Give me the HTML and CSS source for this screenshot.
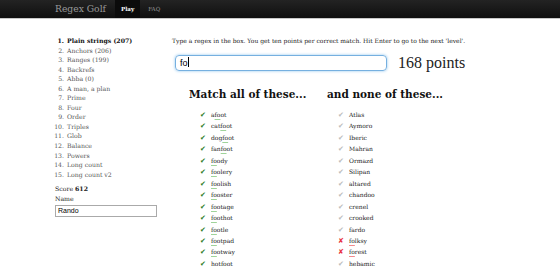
FILE: index.html
```html
<!DOCTYPE html>
<html>
<head>
<meta charset="utf-8">
<link rel="stylesheet" href="styles.css">
</head>
<body>
<nav class="nav">
  <span class="brand">Regex Golf</span>
  <span class="tab active">Play</span>
  <span class="tab">FAQ</span>
</nav>
<div class="page">
  <aside class="side">
    <ol class="levels">
      <li class="cur">Plain strings (207)</li>
      <li>Anchors (206)</li>
      <li>Ranges (199)</li>
      <li>Backrefs</li>
      <li>Abba (0)</li>
      <li>A man, a plan</li>
      <li>Prime</li>
      <li>Four</li>
      <li>Order</li>
      <li>Triples</li>
      <li>Glob</li>
      <li>Balance</li>
      <li>Powers</li>
      <li>Long count</li>
      <li>Long count v2</li>
    </ol>
    <div class="score">Score <b>612</b></div>
    <div class="label">Name</div>
    <div class="name">Rando</div>
  </aside>
  <main class="main">
    <p class="intro">Type a regex in the box. You get ten points per correct match. Hit Enter to go to the next 'level'.</p>
    <div class="inputrow">
      <div class="regex">fo<span class="caret"></span></div>
      <div class="points">168 points</div>
    </div>
    <div class="cols">
      <div class="col">
        <h2>Match all of these...</h2>
        <ul class="words">
          <li><span class="mk ok">✔</span>a<u class="g">fo</u>ot</li>
          <li><span class="mk ok">✔</span>cat<u class="g">fo</u>ot</li>
          <li><span class="mk ok">✔</span>dog<u class="g">fo</u>ot</li>
          <li><span class="mk ok">✔</span>fan<u class="g">fo</u>ot</li>
          <li><span class="mk ok">✔</span><u class="g">fo</u>ody</li>
          <li><span class="mk ok">✔</span><u class="g">fo</u>olery</li>
          <li><span class="mk ok">✔</span><u class="g">fo</u>olish</li>
          <li><span class="mk ok">✔</span><u class="g">fo</u>oster</li>
          <li><span class="mk ok">✔</span><u class="g">fo</u>otage</li>
          <li><span class="mk ok">✔</span><u class="g">fo</u>othot</li>
          <li><span class="mk ok">✔</span><u class="g">fo</u>otle</li>
          <li><span class="mk ok">✔</span><u class="g">fo</u>otpad</li>
          <li><span class="mk ok">✔</span><u class="g">fo</u>otway</li>
          <li><span class="mk ok">✔</span>hot<u class="g">fo</u>ot</li>
        </ul>
      </div>
      <div class="col">
        <h2>and none of these...</h2>
        <ul class="words">
          <li><span class="mk dim">✔</span>Atlas</li>
          <li><span class="mk dim">✔</span>Aymoro</li>
          <li><span class="mk dim">✔</span>Iberic</li>
          <li><span class="mk dim">✔</span>Mahran</li>
          <li><span class="mk dim">✔</span>Ormazd</li>
          <li><span class="mk dim">✔</span>Silipan</li>
          <li><span class="mk dim">✔</span>altared</li>
          <li><span class="mk dim">✔</span>chandoo</li>
          <li><span class="mk dim">✔</span>crenel</li>
          <li><span class="mk dim">✔</span>crooked</li>
          <li><span class="mk dim">✔</span>fardo</li>
          <li><span class="mk bad">✘</span><u class="r">fo</u>lksy</li>
          <li><span class="mk bad">✘</span><u class="r">fo</u>rest</li>
          <li><span class="mk dim">✔</span>hebamic</li>
        </ul>
      </div>
    </div>
  </main>
</div>
</body>
</html>
```
FILE: styles.css
```css
* { box-sizing: border-box; }
html, body { margin: 0; padding: 0; background: #fff; }
body {
  font-family: "DejaVu Serif", Georgia, serif;
  color: #333;
  width: 560px;
  height: 268px;
  overflow: hidden;
}
.nav {
  height: 19px;
  background: linear-gradient(#232323, #0f0f0f);
  border-bottom: 1px solid #c8c8c8;
  display: flex;
  align-items: stretch;
  padding-left: 55px;
}
.brand {
  color: #999;
  font-size: 9.2px;
  line-height: 18px;
  margin-right: 9px;
}
.tab {
  color: #999;
  font-size: 5.6px;
  line-height: 18px;
  padding: 0 6px;
}
.tab.active {
  color: #fff;
  font-weight: bold;
  background: #0b0b0b;
  margin-right: 2px;
}
.page {
  display: flex;
  padding-left: 55px;
  padding-top: 17px;
}
.side { width: 117px; flex: none; }
.levels {
  margin: 0;
  padding-left: 11px;
  font-size: 6.2px;
  line-height: 9.55px;
  color: #555;
}
.levels li { padding-left: 1px; }
.levels li.cur { color: #111; font-weight: bold; }
.score { font-size: 6.2px; color: #222; margin-top: 5px; line-height: 10px; }
.label { font-size: 6.2px; color: #222; line-height: 10px; }
.name {
  width: 102px;
  height: 12px;
  border: 1px solid #aaa;
  font-family: "Liberation Sans", Arial, sans-serif;
  font-size: 7px;
  line-height: 10px;
  padding-left: 2px;
  color: #000;
  margin-top: 1px;
}
.main { flex: 1; }
.intro {
  margin: 0;
  font-size: 6px;
  line-height: 9px;
  color: #222;
}
.inputrow { display: flex; align-items: center; margin-top: 10px; }
.regex {
  margin-left: 3px;
  width: 212px;
  height: 16px;
  border: 1px solid #76b0e0;
  border-radius: 4px;
  box-shadow: 0 0 3px #8fc5ee;
  font-family: "Liberation Sans", Arial, sans-serif;
  font-size: 9px;
  line-height: 14px;
  padding-left: 4px;
  color: #000;
}
.caret {
  display: inline-block;
  width: 1px;
  height: 10px;
  background: #000;
  vertical-align: -1px;
}
.points {
  margin-left: 11px;
  font-family: "Liberation Serif", "Times New Roman", serif;
  font-size: 16px;
  color: #222;
  line-height: 16px;
}
.cols { display: flex; margin-top: 16px; padding-left: 17px; }
.col { width: 138px; }
.col h2 {
  margin: 0;
  font-size: 10.5px;
  line-height: 15px;
  color: #111;
  font-weight: bold;
}
.words {
  list-style: none;
  margin: 7px 0 0;
  padding-left: 11px;
  font-size: 6px;
  color: #222;
}
.words li {
  height: 11.46px;
  line-height: 11.46px;
  white-space: nowrap;
}
.mk { display: inline-block; width: 11px; font-size: 7px; line-height: 1; }
.ok { color: #2e7d1f; }
.dim { color: #bbb; }
.bad { color: #e8303b; }
u {
  text-decoration: underline;
  text-decoration-thickness: 1px;
  text-underline-offset: 1.5px;
}
u.g { text-decoration-color: #9fd39a; }
u.r { text-decoration-color: #f28a8f; }
```
